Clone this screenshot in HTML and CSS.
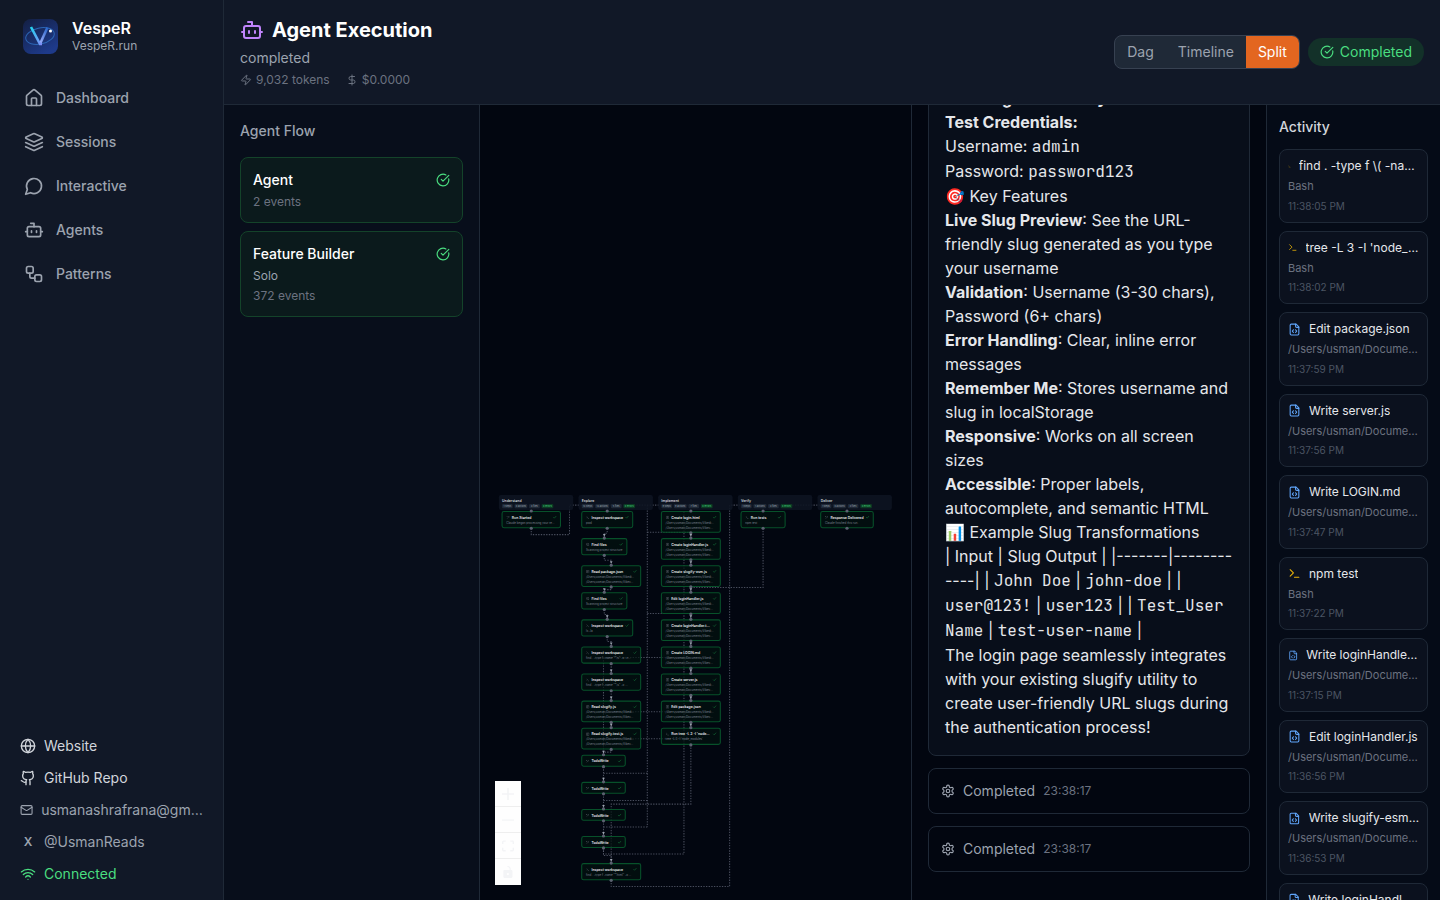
FILE: index.html
```html
<!DOCTYPE html>
<html lang="en">
<head>
  <meta charset="UTF-8">
  <title>VespeR — Agent Execution</title>
  <meta name="viewport" content="width=device-width, initial-scale=1">
  <link rel="stylesheet" href="styles.css">
</head>
<body>
  <svg class="sprite" aria-hidden="true">
    <symbol id="i-home" viewBox="0 0 24 24"><path d="M15 21v-8a1 1 0 0 0-1-1h-4a1 1 0 0 0-1 1v8"/><path d="M3 10a2 2 0 0 1 .709-1.528l7-5.999a2 2 0 0 1 2.582 0l7 5.999A2 2 0 0 1 21 10v9a2 2 0 0 1-2 2H5a2 2 0 0 1-2-2z"/></symbol>
    <symbol id="i-layers" viewBox="0 0 24 24"><path d="m12.83 2.18a2 2 0 0 0-1.66 0L2.6 6.08a1 1 0 0 0 0 1.83l8.58 3.91a2 2 0 0 0 1.66 0l8.58-3.9a1 1 0 0 0 0-1.83Z"/><path d="m22 17.65-9.17 4.16a2 2 0 0 1-1.66 0L2 17.65"/><path d="m22 12.65-9.17 4.16a2 2 0 0 1-1.66 0L2 12.65"/></symbol>
    <symbol id="i-chat" viewBox="0 0 24 24"><path d="M7.9 20A9 9 0 1 0 4 16.1L2 22Z"/></symbol>
    <symbol id="i-bot" viewBox="0 0 24 24"><path d="M12 8V4H8"/><rect width="16" height="12" x="4" y="8" rx="2"/><path d="M2 14h2M20 14h2M15 13v2M9 13v2"/></symbol>
    <symbol id="i-flow" viewBox="0 0 24 24"><rect width="8" height="8" x="3" y="3" rx="2"/><path d="M7 11v4a2 2 0 0 0 2 2h4"/><rect width="8" height="8" x="13" y="13" rx="2"/></symbol>
    <symbol id="i-globe" viewBox="0 0 24 24"><circle cx="12" cy="12" r="10"/><path d="M12 2a14.5 14.5 0 0 0 0 20 14.5 14.5 0 0 0 0-20"/><path d="M2 12h20"/></symbol>
    <symbol id="i-github" viewBox="0 0 24 24"><path d="M15 22v-4a4.8 4.8 0 0 0-1-3.5c3 0 6-2 6-5.5.08-1.25-.27-2.48-1-3.5.28-1.15.28-2.35 0-3.5 0 0-1 0-3 1.5-2.64-.5-5.36-.5-8 0C6 2 5 2 5 2c-.3 1.15-.3 2.35 0 3.5A5.403 5.403 0 0 0 4 9c0 3.5 3 5.5 6 5.5-.39.49-.68 1.05-.85 1.65-.17.6-.22 1.23-.15 1.85v4"/><path d="M9 18c-4.51 2-5-2-7-2"/></symbol>
    <symbol id="i-mail" viewBox="0 0 24 24"><rect width="20" height="16" x="2" y="4" rx="2"/><path d="m22 7-8.97 5.7a1.94 1.94 0 0 1-2.06 0L2 7"/></symbol>
    <symbol id="i-wifi" viewBox="0 0 24 24"><path d="M12 20h.01M2 8.82a15 15 0 0 1 20 0M5 12.859a10 10 0 0 1 14 0M8.5 16.429a5 5 0 0 1 7 0"/></symbol>
    <symbol id="i-zap" viewBox="0 0 24 24"><path d="M4 14a1 1 0 0 1-.78-1.63l9.9-10.2a.5.5 0 0 1 .86.46l-1.92 6.02A1 1 0 0 0 13 10h7a1 1 0 0 1 .78 1.63l-9.9 10.2a.5.5 0 0 1-.86-.46l1.92-6.02A1 1 0 0 0 11 14z"/></symbol>
    <symbol id="i-dollar" viewBox="0 0 24 24"><path d="M12 2v20M17 5H9.5a3.5 3.5 0 0 0 0 7h5a3.5 3.5 0 0 1 0 7H6"/></symbol>
    <symbol id="i-done" viewBox="0 0 24 24"><path d="M21.801 10A10 10 0 1 1 17 3.335"/><path d="m9 11 3 3L22 4"/></symbol>
    <symbol id="i-gear" viewBox="0 0 24 24"><path d="M12.22 2h-.44a2 2 0 0 0-2 2v.18a2 2 0 0 1-1 1.73l-.43.25a2 2 0 0 1-2 0l-.15-.08a2 2 0 0 0-2.73.73l-.22.38a2 2 0 0 0 .73 2.73l.15.1a2 2 0 0 1 1 1.72v.51a2 2 0 0 1-1 1.74l-.15.09a2 2 0 0 0-.73 2.73l.22.38a2 2 0 0 0 2.73.73l.15-.08a2 2 0 0 1 2 0l.43.25a2 2 0 0 1 1 1.73V20a2 2 0 0 0 2 2h.44a2 2 0 0 0 2-2v-.18a2 2 0 0 1 1-1.73l.43-.25a2 2 0 0 1 2 0l.15.08a2 2 0 0 0 2.73-.73l.22-.39a2 2 0 0 0-.73-2.73l-.15-.08a2 2 0 0 1-1-1.74v-.5a2 2 0 0 1 1-1.74l.15-.09a2 2 0 0 0 .73-2.73l-.22-.38a2 2 0 0 0-2.73-.73l-.15.08a2 2 0 0 1-2 0l-.43-.25a2 2 0 0 1-1-1.73V4a2 2 0 0 0-2-2z"/><circle cx="12" cy="12" r="3"/></symbol>
    <symbol id="i-term" viewBox="0 0 24 24"><path d="m4 17 6-6-6-6M12 19h8"/></symbol>
    <symbol id="i-file" viewBox="0 0 24 24"><path d="M15 2H6a2 2 0 0 0-2 2v16a2 2 0 0 0 2 2h12a2 2 0 0 0 2-2V7Z"/><path d="M14 2v4a2 2 0 0 0 2 2h4M10 12.5 8 15l2 2.500M14 12.500l2 2.500-2 2.500"/></symbol>
    <symbol id="i-doc" viewBox="0 0 24 24"><rect x="3" y="3" width="18" height="18" rx="2"/><path d="M8 8h8M8 12h8M8 16h5"/></symbol>
    <symbol id="i-search" viewBox="0 0 24 24"><circle cx="11" cy="11" r="8"/><path d="m21 21-4-4M8 11h6"/></symbol>
    <symbol id="i-wand" viewBox="0 0 24 24"><path d="m5 20 9-9M14 4v4M20 10h-4M17 7l3-3M4 5v5M2 7h5"/></symbol>
  </svg>

  <div class="app">
    <aside class="sidebar">
      <div class="brand">
        <svg class="logo" viewBox="0 0 36 36" aria-hidden="true">
          <defs>
            <linearGradient id="lg-bg" x1="0" y1="0" x2="0.6" y2="1"><stop offset="0" stop-color="#131f42"/><stop offset="1" stop-color="#1e3a8a"/></linearGradient>
            <linearGradient id="lg-l" x1="0" y1="0" x2="1" y2="1"><stop offset="0" stop-color="#22d3ee"/><stop offset="1" stop-color="#818cf8"/></linearGradient>
            <linearGradient id="lg-r" x1="1" y1="0" x2="0" y2="1"><stop offset="0" stop-color="#2563c8"/><stop offset="1" stop-color="#a5b4fc"/></linearGradient>
          </defs>
          <rect x="1" y="1" width="35" height="35" rx="8" fill="url(#lg-bg)"/>
          <ellipse cx="18" cy="18" rx="14.500" ry="8" fill="none" stroke="#2c66b5" stroke-width="1" transform="rotate(-12 18 18)"/>
          <path d="M18 26 25.500 9.500" stroke="url(#lg-r)" stroke-width="2.600" fill="none"/>
          <path d="M9 9 18 26h2" stroke="url(#lg-l)" stroke-width="2.600" fill="none"/>
          <circle cx="28.500" cy="13" r="1.500" fill="#fff"/>
        </svg>
        <div>
          <div class="brand-name">VespeR</div>
          <div class="brand-sub">VespeR.run</div>
        </div>
      </div>
      <nav class="menu">
        <a href="#"><svg class="icon icon-20"><use href="#i-home"/></svg>Dashboard</a>
        <a href="#"><svg class="icon icon-20"><use href="#i-layers"/></svg>Sessions</a>
        <a href="#"><svg class="icon icon-20"><use href="#i-chat"/></svg>Interactive</a>
        <a href="#"><svg class="icon icon-20"><use href="#i-bot"/></svg>Agents</a>
        <a href="#"><svg class="icon icon-20"><use href="#i-flow"/></svg>Patterns</a>
      </nav>
      <div class="links">
        <a class="bright" href="#"><svg class="icon icon-16"><use href="#i-globe"/></svg><span>Website</span></a>
        <a class="bright" href="#"><svg class="icon icon-16"><use href="#i-github"/></svg><span>GitHub Repo</span></a>
        <a href="#"><svg class="icon icon-16"><use href="#i-mail"/></svg><span>usmanashrafrana@gmail.com</span></a>
        <a href="#"><b class="x-mark">X</b><span>@UsmanReads</span></a>
        <div class="status"><svg class="icon icon-16"><use href="#i-wifi"/></svg><span>Connected</span></div>
      </div>
    </aside>

    <div class="content">
      <header class="topbar">
        <div>
          <h1><svg class="icon icon-24"><use href="#i-bot"/></svg>Agent Execution</h1>
          <div class="state">completed</div>
          <div class="stats">
            <span><svg class="icon icon-12"><use href="#i-zap"/></svg>9,032 tokens</span>
            <span><svg class="icon icon-12"><use href="#i-dollar"/></svg>$0.0000</span>
          </div>
        </div>
        <div class="actions">
          <div class="toggle">
            <button type="button">Dag</button>
            <button type="button">Timeline</button>
            <button type="button" class="selected">Split</button>
          </div>
          <div class="badge"><svg class="icon icon-14"><use href="#i-done"/></svg>Completed</div>
        </div>
      </header>

      <main class="panes">
        <section class="flow">
          <h2>Agent Flow</h2>
          <div class="agent">
            <div class="agent-head">Agent<svg class="icon icon-14"><use href="#i-done"/></svg></div>
            <div class="agent-sub">2 events</div>
          </div>
          <div class="agent">
            <div class="agent-head">Feature Builder<svg class="icon icon-14"><use href="#i-done"/></svg></div>
            <div class="agent-sub role">Solo</div>
            <div class="agent-sub">372 events</div>
          </div>
        </section>

        <section class="canvas">
          <svg id="graph" class="graph" viewBox="-71 -1469 1623 2994" preserveAspectRatio="xMidYMax meet"></svg>
          <div class="controls">
            <button type="button" aria-label="Zoom in"><svg viewBox="0 0 32 32"><path d="M32 18.133H18.133V32h-4.266V18.133H0v-4.266h13.867V0h4.266v13.867H32z"/></svg></button>
            <button type="button" aria-label="Zoom out"><svg viewBox="0 0 32 32"><path d="M0 14.500h32v3.500H0z"/></svg></button>
            <button type="button" aria-label="Fit view"><svg viewBox="0 0 32 30"><path d="M3.692 4.630c0-.530.400-.938.939-.938h5.215V0H4.708C2.130 0 0 2.054 0 4.630v5.216h3.692V4.631zM27.354 0h-5.200v3.692h5.170c.530 0 .984.400.984.939v5.215H32V4.631A4.624 4.624 0 0 0 27.354 0zm.954 24.830c0 .532-.400.940-.939.940h-5.215v3.768h5.215c2.577 0 4.631-2.130 4.631-4.707v-5.139h-3.692v5.139zm-23.677.940a.919.919 0 0 1-.939-.940v-5.138H0v5.139c0 2.577 2.130 4.707 4.708 4.707h5.138V25.770H4.631z"/></svg></button>
            <button type="button" aria-label="Toggle lock"><svg viewBox="0 0 25 32"><path d="M21.333 10.667H19.810V7.619C19.810 3.429 16.380 0 12.190 0c-4.114 1.828-1.370 2.133.305 2.438 1.676.305 4.420 2.590 4.420 5.181v3.048H3.047A3.056 3.056 0 0 0 0 13.714v15.238A3.056 3.056 0 0 0 3.048 32h18.285a3.056 3.056 0 0 0 3.048-3.048V13.714a3.056 3.056 0 0 0-3.048-3.047zM12.190 24.533a3.056 3.056 0 0 1-3.047-3.047 3.056 3.056 0 0 1 3.047-3.048 3.056 3.056 0 0 1 3.048 3.048 3.056 3.056 0 0 1-3.048 3.047z"/></svg></button>
          </div>
        </section>

        <section class="messages">
          <article class="message">
            <p><strong>Creating in Directory</strong></p>
            <p><strong>Test Credentials:</strong></p>
            <p>Username: <code>admin</code></p>
            <p>Password: <code>password123</code></p>
            <p>🎯 Key Features</p>
            <p><strong>Live Slug Preview</strong>: See the URL-friendly slug generated as you type your username</p>
            <p><strong>Validation</strong>: Username (3-30 chars), Password (6+ chars)</p>
            <p><strong>Error Handling</strong>: Clear, inline error messages</p>
            <p><strong>Remember Me</strong>: Stores username and slug in localStorage</p>
            <p><strong>Responsive</strong>: Works on all screen sizes</p>
            <p><strong>Accessible</strong>: Proper labels, autocomplete, and semantic HTML</p>
            <p>📊 Example Slug Transformations</p>
            <p>| Input | Slug Output | |-------|------------| | <code>John Doe</code> | <code>john-doe</code> | | <code>user@123!</code> | <code>user123</code> | | <code>Test_User Name</code> | <code>test-user-name</code> |</p>
            <p>The login page seamlessly integrates with your existing slugify utility to create user-friendly URL slugs during the authentication process!</p>
          </article>
          <div class="event"><svg class="icon icon-14"><use href="#i-gear"/></svg>Completed <time>23:38:17</time></div>
          <div class="event"><svg class="icon icon-14"><use href="#i-gear"/></svg>Completed <time>23:38:17</time></div>
        </section>

        <aside class="activity">
          <h2>Activity</h2>
          <div id="activity-list" class="activity-list"></div>
        </aside>
      </main>
    </div>
  </div>
  <script src="script.js"></script>
</body>
</html>
```
FILE: styles.css
```css
:root {
  --bg: #020610;
  --surface: #111827;
  --line: #1f2937;
  --text: #e5e7eb;
  --muted: #9ca3af;
  --faint: #6b7280;
  --green: #4ade80;
  --orange: #e36620;
}
* { box-sizing: border-box; }
body {
  margin: 0;
  background: var(--bg);
  color: var(--text);
  font-family: Inter, "Liberation Sans", sans-serif;
  font-size: 14px;
  line-height: 20px;
}
h1, h2, p { margin: 0; }
a { color: inherit; text-decoration: none; }
button { font: inherit; color: inherit; border: none; cursor: pointer; }
.sprite { position: absolute; width: 0; height: 0; }
.icon { fill: none; stroke: currentColor; stroke-width: 2; stroke-linecap: round; stroke-linejoin: round; }
.icon-12 { width: 12px; height: 12px; }
.icon-13 { width: 13px; height: 13px; }
.icon-14 { width: 14px; height: 14px; }
.icon-16 { width: 16px; height: 16px; }
.icon-20 { width: 20px; height: 20px; }
.icon-24 { width: 24px; height: 24px; }

.app { display: flex; height: 100vh; overflow: hidden; }

/* Sidebar */
.sidebar {
  width: 224px;
  flex: none;
  display: flex;
  flex-direction: column;
  background: var(--surface);
  border-right: 1px solid var(--line);
}
.brand { display: flex; align-items: center; gap: 14px; padding: 18px 22px; }
.logo { width: 36px; height: 36px; }
.brand-name { font-size: 16px; font-weight: 600; color: #fff; }
.brand-sub { font-size: 12px; line-height: 16px; color: var(--muted); }
.menu { flex: 1; display: flex; flex-direction: column; gap: 4px; padding: 6px 12px; }
.menu a {
  display: flex;
  align-items: center;
  gap: 12px;
  padding: 10px 12px;
  color: var(--muted);
  font-weight: 500;
}
.menu a:hover { color: #fff; }
.links { padding: 10px 12px; color: var(--muted); }
.links a, .status { display: flex; align-items: center; gap: 8px; padding: 6px 8px; }
.links span { overflow: hidden; text-overflow: ellipsis; white-space: nowrap; }
.links .bright { color: #d1d5db; }
.x-mark { width: 16px; text-align: center; font-size: 12px; font-weight: 600; }
.status { color: var(--green); }

/* Top bar */
.content { flex: 1; min-width: 0; display: flex; flex-direction: column; }
.topbar {
  display: flex;
  align-items: center;
  justify-content: space-between;
  padding: 16px;
  background: var(--surface);
  border-bottom: 1px solid var(--line);
}
h1 { display: flex; align-items: center; gap: 8px; font-size: 20px; line-height: 28px; font-weight: 700; color: #fff; }
h1 .icon { color: #c084fc; }
.state { margin-top: 4px; color: var(--muted); }
.stats { display: flex; gap: 16px; margin-top: 4px; font-size: 12px; line-height: 16px; color: var(--faint); }
.stats span { display: flex; align-items: center; gap: 4px; }
.actions { display: flex; align-items: center; gap: 8px; }
.toggle { display: flex; border: 1px solid #374151; border-radius: 8px; overflow: hidden; background: var(--line); }
.toggle button { padding: 6px 12px; background: none; color: var(--muted); }
.toggle .selected { background: var(--orange); color: #fff; }
.badge {
  display: flex;
  align-items: center;
  gap: 6px;
  padding: 4px 12px;
  border-radius: 14px;
  background: #133129;
  color: var(--green);
}

/* Panes */
.panes {
  flex: 1;
  min-height: 0;
  display: grid;
  grid-template-columns: 256px minmax(0, 431fr) minmax(0, 355fr) minmax(0, 174fr);
  grid-template-rows: minmax(0, 1fr);
}
.flow {
  padding: 16px;
  background: #080e1b;
  border-right: 1px solid var(--line);
}
h2 { font-size: 14px; font-weight: 500; }
.flow h2 { color: var(--muted); margin-bottom: 16px; }
.agent {
  padding: 12px;
  margin-bottom: 8px;
  border: 1px solid #14432a;
  border-radius: 8px;
  background: #0b1a1c;
}
.agent-head { display: flex; align-items: center; justify-content: space-between; color: #fff; font-weight: 500; }
.agent-head .icon { color: var(--green); }
.agent-sub { margin-top: 4px; font-size: 12px; line-height: 16px; color: var(--faint); }
.agent-sub.role { color: var(--muted); }

.canvas { position: relative; }
.graph { display: block; width: 100%; height: 100%; }
.controls {
  position: absolute;
  left: 15px;
  bottom: 15px;
  display: flex;
  flex-direction: column;
}
.controls button {
  display: flex;
  align-items: center;
  justify-content: center;
  width: 26px;
  height: 26px;
  padding: 4px;
  background: #fefefe;
  border-bottom: 1px solid #eee;
}
.controls button:last-child { border-bottom: none; }
.controls svg { width: 12px; height: 12px; fill: #f3f4f6; }

/* Graph, drawn in flow units */
.lane { fill: #0d1421; fill-opacity: 0.9; }
.lane-title { font-size: 13px; font-weight: 600; fill: #d1d5db; }
.pill { fill: #1f2937; }
.pill.ok { fill: #0c3a24; }
.pill-text { font-size: 9px; fill: #9ca3af; text-anchor: middle; }
.pill-text.ok { fill: #4ade80; }
.node { fill: #03130f; fill-opacity: 0.7; stroke: #07512a; stroke-width: 4; }
.node-title { font-size: 13px; font-weight: 600; fill: #e5e7eb; }
.node-text { font-size: 11px; fill: #7b8290; }
.node-icon { fill: none; stroke: #8b919d; stroke-width: 2; }
.node-check { fill: none; stroke: #15803d; stroke-width: 2; }
.handle { fill: #5b6170; }
.edge { fill: none; stroke: #5b6070; stroke-width: 4; stroke-dasharray: 5 5; opacity: 0.8; }
.edge-arrow { fill: #9ca3af; }

/* Messages */
.messages {
  display: flex;
  flex-direction: column;
  justify-content: flex-end;
  gap: 12px;
  padding: 16px 16px 28px;
  overflow: hidden;
  border-left: 1px solid var(--line);
}
.message {
  flex: none;
  padding: 16px;
  border: 1px solid var(--line);
  border-radius: 8px;
  background: #080e1a;
  font-size: 16px;
  line-height: 24px;
}
.message strong { font-weight: 700; }
.message code { font-family: "JetBrains Mono", "Liberation Mono", monospace; font-size: 16px; }
.event {
  flex: none;
  display: flex;
  align-items: center;
  gap: 8px;
  padding: 12px;
  border: 1px solid var(--line);
  border-radius: 8px;
  color: var(--muted);
}
.event time { font-size: 12px; color: var(--faint); }

/* Activity */
.activity {
  padding: 12px;
  overflow: hidden;
  background: #050b17;
  border-left: 1px solid var(--line);
}
.activity h2 { color: #d1d5db; }
.activity-list { display: flex; flex-direction: column; gap: 8px; margin-top: 12px; }
.item { padding: 8px; border: 1px solid var(--line); border-radius: 8px; background: #0b111e; }
.item-title { display: flex; align-items: center; gap: 8px; margin-bottom: 4px; font-size: 12px; line-height: 16px; }
.item-title span, .item-sub { overflow: hidden; text-overflow: ellipsis; white-space: nowrap; }
.item-title .icon.bash { color: #eab308; }
.item-title .icon.file { color: #60a5fa; }
.item-sub { margin-bottom: 4px; font-size: 11px; line-height: 1.5; color: var(--faint); }
.item-time { font-size: 10px; line-height: 1.5; color: #4b5563; }
```
FILE: script.js
```js
// Activity feed
const docPath = '/Users/usman/Documents/Vibecoding/slugify';
const activity = [
  ['bash', "find . -type f \\( -name '*.js' -o -name '*.html' -o -name '*.json' \\) -not -path './node_modules/*' | sort", 'Bash', '11:38:05 PM'],
  ['bash', "tree -L 3 -I 'node_modules'", 'Bash', '11:38:02 PM'],
  ['file', 'Edit package.json', docPath, '11:37:59 PM'],
  ['file', 'Write server.js', docPath, '11:37:56 PM'],
  ['file', 'Write LOGIN.md', docPath, '11:37:47 PM'],
  ['bash', 'npm test', 'Bash', '11:37:22 PM'],
  ['file', 'Write loginHandler.test.js', docPath, '11:37:15 PM'],
  ['file', 'Edit loginHandler.js', docPath, '11:36:56 PM'],
  ['file', 'Write slugify-esm.js', docPath, '11:36:53 PM'],
  ['file', 'Write loginHandler.js', docPath, '11:36:41 PM']
];
document.getElementById('activity-list').innerHTML = activity.map(([kind, title, sub, time]) => `
  <div class="item">
    <div class="item-title">
      <svg class="icon icon-13 ${kind}"><use href="#${kind === 'bash' ? 'i-term' : 'i-file'}"/></svg>
      <span>${title}</span>
    </div>
    <div class="item-sub">${sub}</div>
    <div class="item-time">${time}</div>
  </div>`).join('');

// Execution graph
const path1 = '/Users/usman/Documents/Vibedi…';
const path2 = '/Users/usman/Documents/Vibec…';
const lanes = [
  { name: 'Understand', steps: 1, actions: 0, files: 0, nodes: [
    ['wand', 'Run Started', 224, 'Claude began processing your re…']
  ]},
  { name: 'Explore', steps: 14, actions: 14, files: 5, nodes: [
    ['term', 'Inspect workspace', 196, 'pwd'],
    ['search', 'Find files', 174, 'Scanning project structure'],
    ['doc', 'Read package.json', 226, path1, path2],
    ['search', 'Find files', 174, 'Scanning project structure'],
    ['term', 'Inspect workspace', 196, 'ls -la'],
    ['term', 'Inspect workspace', 226, 'find . -type f -name "*.js" -o -n…'],
    ['term', 'Inspect workspace', 226, 'find . -type f -name "*.js" -o …'],
    ['doc', 'Read slugify.js', 226, path1, path2],
    ['doc', 'Read slugify.test.js', 226, path1, path2],
    ['wand', 'TodoWrite', 168],
    ['wand', 'TodoWrite', 168],
    ['wand', 'TodoWrite', 168],
    ['wand', 'TodoWrite', 168],
    ['term', 'Inspect workspace', 226, 'find . -type f -name "*.html" -o …']
  ]},
  { name: 'Implement', steps: 9, actions: 9, files: 7, nodes: [
    ['doc', 'Create login.html', 226, path1, path2],
    ['doc', 'Create loginHandler.js', 226, path1, path2],
    ['doc', 'Create slugify-esm.js', 226, path1, path2],
    ['doc', 'Edit loginHandler.js', 226, path1, path2],
    ['doc', 'Create loginHandler.t…', 226, path1, path2],
    ['doc', 'Create LOGIN.md', 226, path1, path2],
    ['doc', 'Create server.js', 226, path1, path2],
    ['doc', 'Edit package.json', 226, path1, path2],
    ['term', "Run tree -L 3 -I 'node…", 226, 'tree -L 3 -I \'node_modules\'']
  ]},
  { name: 'Verify', steps: 1, actions: 1, files: 0, nodes: [
    ['term', 'Run tests', 170, 'npm test']
  ]},
  { name: 'Deliver', steps: 1, actions: 0, files: 0, nodes: [
    ['wand', 'Response Delivered', 202, 'Claude finished this run.']
  ]}
];
const LANE = 300;
const ROW = 102;
const heights = [45, 65, 82];

// long connections between lanes and back to earlier steps
const links = [
  'M122 125V149H266V38H408V60',
  'M408 38H723V60',
  'M559 38V1250',
  'M559 140H723',
  'M559 446H723',
  'M394 612H723',
  'M423 816H723',
  'M423 918H723',
  'M394 612V978',
  'M394 1048H559',
  'M394 1150H559',
  'M394 1250H559',
  'M394 1329V1352H697V60',
  'M723 941V1164H423V1386',
  'M423 1451V1474H869V38H995V60',
  'M995 125V348H723',
  'M995 38H1311V60'
];

let lanesSvg = '';
let edges = links.map(d => `<path class="edge" d="${d}"/>`).join('');
let nodes = '';
lanes.forEach((lane, i) => {
  const x = i * LANE;
  lanesSvg += `<rect class="lane" x="${x}" y="0" width="280" height="56" rx="8"/>
    <text class="lane-title" x="${x + 12}" y="26">${lane.name}</text>`;
  let px = x + 12;
  [`${lane.steps} steps`, `${lane.actions} actions`, `${lane.files} files`, '0 errors'].forEach((label, n) => {
    const w = label.length * 4 + 12;
    const ok = n === 3 ? ' ok' : '';
    lanesSvg += `<rect class="pill${ok}" x="${px}" y="34" width="${w}" height="16" rx="4"/>
      <text class="pill-text${ok}" x="${px + w / 2}" y="45">${label}</text>`;
    px += w + 7;
  });

  lane.nodes.forEach(([icon, title, w, ...lines], row) => {
    const nx = x + 10;
    const ny = 60 + row * ROW;
    const h = heights[lines.length];
    const cx = nx + w / 2;
    nodes += `<rect class="node" x="${nx + 2}" y="${ny + 2}" width="${w - 4}" height="${h - 4}" rx="7"/>
      <svg class="node-icon" x="${nx + 18}" y="${ny + 17}" width="14" height="14"><use href="#i-${icon}"/></svg>
      <text class="node-title" x="${nx + 39}" y="${ny + 29}">${title}</text>
      <path class="node-check" d="M${nx + w - 29} ${ny + 23}l4 4 7-8"/>
      <circle class="handle" cx="${cx}" cy="${ny}" r="6"/>
      <circle class="handle" cx="${cx}" cy="${ny + h}" r="6"/>`;
    lines.forEach((line, n) => {
      nodes += `<text class="node-text" x="${nx + 18}" y="${ny + 48 + n * 19}">${line}</text>`;
    });
    const next = lane.nodes[row + 1];
    if (next) {
      const tx = nx + next[2] / 2;
      const ty = ny + ROW;
      const mid = (ny + h + ty) / 2;
      edges += `<path class="edge" d="M${cx} ${ny + h}V${mid}H${tx}V${ty}"/>`;
      nodes += `<path class="edge-arrow" d="M${tx - 5} ${ty - 15}h10l-5 10z"/>`;
    }
  });
});
document.getElementById('graph').innerHTML = edges + lanesSvg + nodes;
```
